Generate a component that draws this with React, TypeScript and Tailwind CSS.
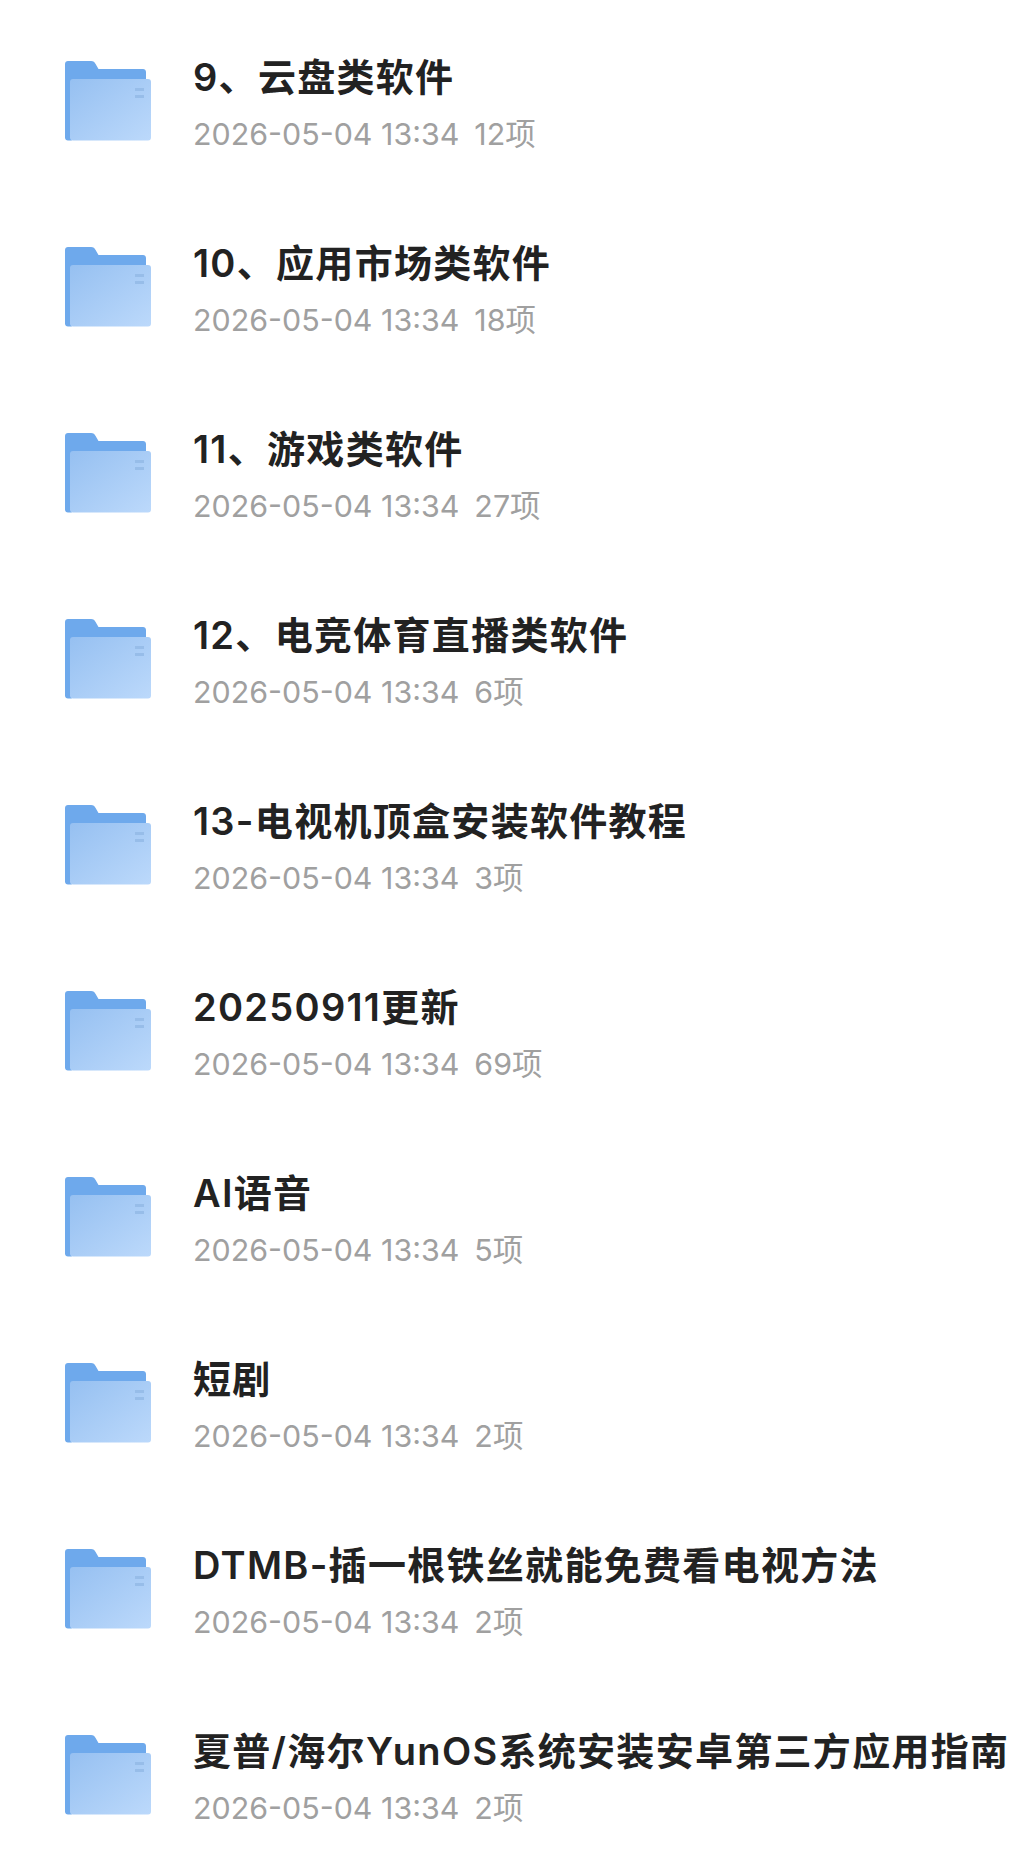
const folders = [
  { name: '9、云盘类软件', count: '12项' },
  { name: '10、应用市场类软件', count: '18项' },
  { name: '11、游戏类软件', count: '27项' },
  { name: '12、电竞体育直播类软件', count: '6项' },
  { name: '13-电视机顶盒安装软件教程', count: '3项' },
  { name: '20250911更新', count: '69项' },
  { name: 'AI语音', count: '5项' },
  { name: '短剧', count: '2项' },
  { name: 'DTMB-插一根铁丝就能免费看电视方法', count: '2项' },
  { name: '夏普/海尔YunOS系统安装安卓第三方应用指南', count: '2项' },
];

function FolderIcon({ id }: { id: number }) {
  return (
    <svg width="86" height="80" viewBox="0 0 86 80" className="shrink-0">
      <defs>
        <linearGradient id={`front-${id}`} x1="0" y1="0" x2="1" y2="1">
          <stop offset="0" stopColor="#96c0f1" />
          <stop offset="1" stopColor="#bcd9fb" />
        </linearGradient>
      </defs>
      <path
        d="M3 0H26C28.5 0 29.6 1 30.6 3L33.5 8H78C79.7 8 81 9.3 81 11V20H6V77C6 78.2 6.4 79 7 79.6H3C1.3 79.6 0 78.3 0 76.6V3C0 1.3 1.3 0 3 0Z"
        fill="#6ea9ec"
      />
      <rect x="5" y="18" width="81" height="61.6" rx="3" fill={`url(#front-${id})`} />
      <rect x="70" y="27" width="9" height="3" fill="#97bde9" />
      <rect x="70" y="34" width="9" height="3" fill="#97bde9" />
    </svg>
  );
}

export default function App() {
  return (
    <main className="min-h-[1849px] overflow-hidden bg-white pt-[61px] pl-[65px] font-['Inter','Noto_Sans_CJK_SC',sans-serif]">
      <ul className="flex flex-col gap-[106px]">
        {folders.map((folder, i) => (
          <li key={folder.name} className="flex h-[80px] items-center gap-[42px]">
            <FolderIcon id={i} />
            <div className="flex flex-col gap-[16px] pt-[3px] whitespace-nowrap">
              <p className="text-[38px] leading-[46px] font-semibold tracking-[1.3px] text-[#222222]">{folder.name}</p>
              <p className="flex gap-[15px] text-[30.4px] leading-[36px] text-[#a0a0a0]">
                <span>2026-05-04 13:34</span>
                <span>{folder.count}</span>
              </p>
            </div>
          </li>
        ))}
      </ul>
    </main>
  );
}
